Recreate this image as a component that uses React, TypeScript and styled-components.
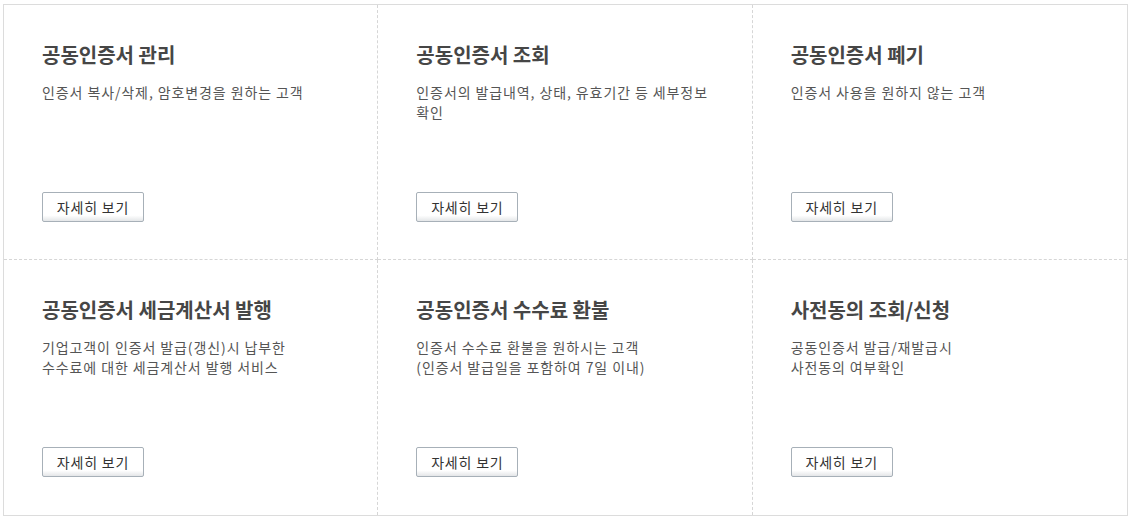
import React from "react";
import styled, { createGlobalStyle } from "styled-components";

const Global = createGlobalStyle`
  html, body { margin: 0; padding: 0; background: #fff; }
  body { font-family: "Noto Sans CJK KR", "Noto Sans", sans-serif; }
`;

const Grid = styled.div`
  margin: 4px 0 0 3px;
  width: 1125px;
  box-sizing: border-box;
  border: 1px solid #dcdcdc;
  display: grid;
  grid-template-columns: repeat(3, 1fr);
`;

const Cell = styled.div<{ $right: boolean; $bottom: boolean }>`
  height: 255px;
  box-sizing: border-box;
  padding: 36px 38px 0;
  display: flex;
  flex-direction: column;
  border-right: ${(p) => (p.$right ? "1px dashed #d6d6d6" : "none")};
  border-bottom: ${(p) => (p.$bottom ? "1px dashed #d6d6d6" : "none")};
`;

const Title = styled.h3`
  margin: 0;
  font-size: 20px;
  line-height: 28px;
  font-weight: 700;
  color: #464646;
`;

const Desc = styled.p`
  margin: 13px 0 0;
  font-size: 14px;
  line-height: 20px;
  color: #555;
  letter-spacing: 0.9px;
  white-space: pre-line;
  height: 100px;
`;

const Button = styled.button`
  align-self: flex-start;
  width: 102px;
  height: 30px;
  margin-top: 10px;
  border: 1px solid #a7b0b8;
  border-radius: 2px;
  background: linear-gradient(#ffffff 0%, #ffffff 80%, #e4e6e8 100%);
  font-family: "Noto Sans CJK KR", "Noto Sans", sans-serif;
  font-size: 14px;
  letter-spacing: 0.8px;
  color: #333;
  padding: 0;
  cursor: pointer;
`;

const items = [
  { t: "공동인증서 관리", d: "인증서 복사/삭제, 암호변경을 원하는 고객" },
  { t: "공동인증서 조회", d: "인증서의 발급내역, 상태, 유효기간 등 세부정보\n확인" },
  { t: "공동인증서 폐기", d: "인증서 사용을 원하지 않는 고객" },
  { t: "공동인증서 세금계산서 발행", d: "기업고객이 인증서 발급(갱신)시 납부한\n수수료에 대한 세금계산서 발행 서비스" },
  { t: "공동인증서 수수료 환불", d: "인증서 수수료 환불을 원하시는 고객\n(인증서 발급일을 포함하여 7일 이내)" },
  { t: "사전동의 조회/신청", d: "공동인증서 발급/재발급시\n사전동의 여부확인" },
];

export default function App() {
  return (
    <>
      <Global />
      <Grid>
        {items.map((it, i) => (
          <Cell key={i} $right={i % 3 !== 2} $bottom={i < 3}>
            <Title>{it.t}</Title>
            <Desc>{it.d}</Desc>
            <Button>자세히 보기</Button>
          </Cell>
        ))}
      </Grid>
    </>
  );
}
